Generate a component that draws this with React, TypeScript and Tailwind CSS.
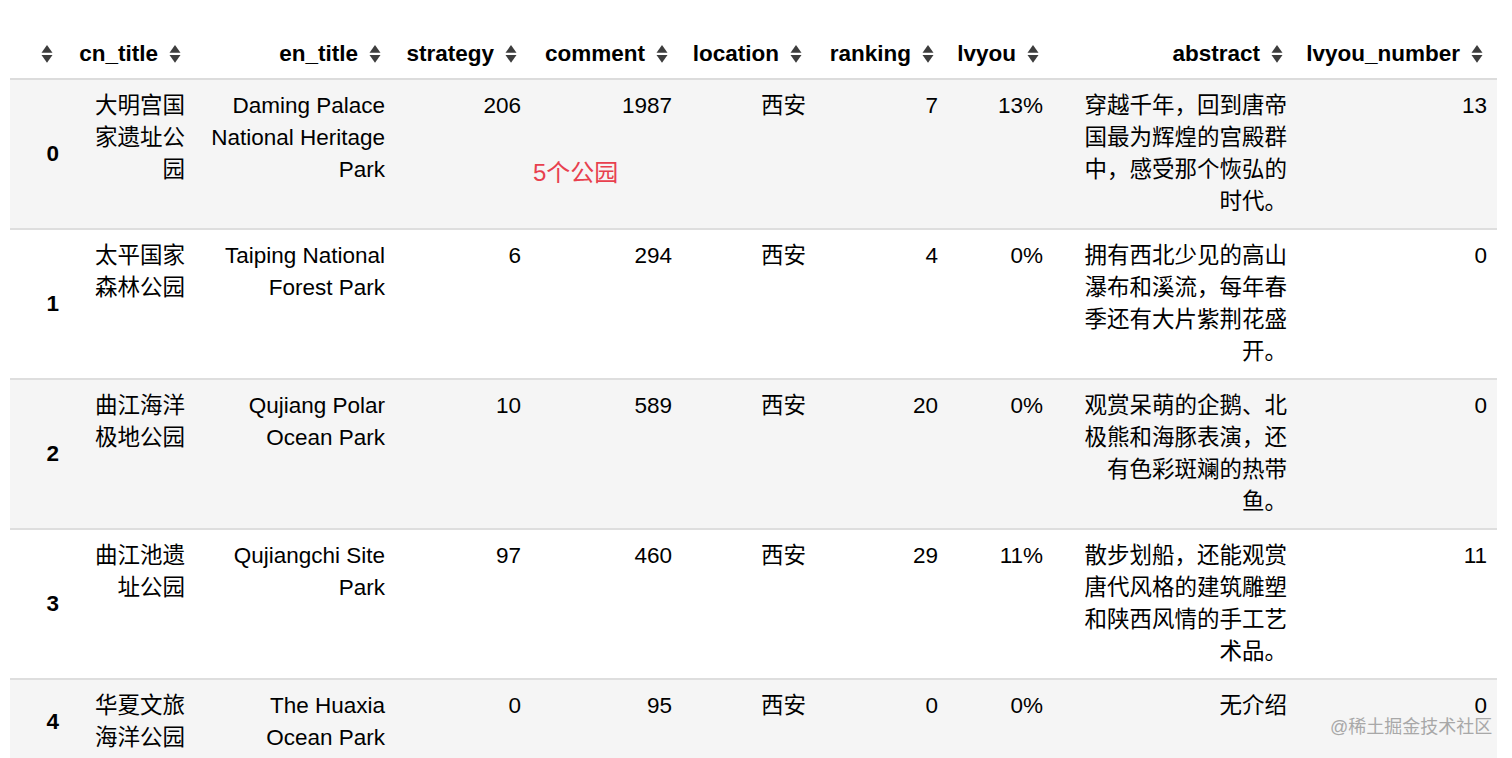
import React from "react";

const SortIcon = () => (
  <svg width="12" height="20" viewBox="0 0 12 20" className="shrink-0">
    <polygon points="0.5,8.8 6,1 11.5,8.8" fill="#3d3d3d" />
    <polygon points="0.5,11 11.5,11 6,18.8" fill="#3d3d3d" />
  </svg>
);

type Row = {
  idx: string;
  cn: string[];
  en: string[];
  strategy: string;
  comment: string;
  location: string;
  ranking: string;
  lvyou: string;
  abstract: string[];
  num: string;
};

const rows: Row[] = [
  {
    idx: "0",
    cn: ["大明宫国", "家遗址公", "园"],
    en: ["Daming Palace", "National Heritage", "Park"],
    strategy: "206",
    comment: "1987",
    location: "西安",
    ranking: "7",
    lvyou: "13%",
    abstract: ["穿越千年，回到唐帝", "国最为辉煌的宫殿群", "中，感受那个恢弘的", "时代。"],
    num: "13",
  },
  {
    idx: "1",
    cn: ["太平国家", "森林公园"],
    en: ["Taiping National", "Forest Park"],
    strategy: "6",
    comment: "294",
    location: "西安",
    ranking: "4",
    lvyou: "0%",
    abstract: ["拥有西北少见的高山", "瀑布和溪流，每年春", "季还有大片紫荆花盛", "开。"],
    num: "0",
  },
  {
    idx: "2",
    cn: ["曲江海洋", "极地公园"],
    en: ["Qujiang Polar", "Ocean Park"],
    strategy: "10",
    comment: "589",
    location: "西安",
    ranking: "20",
    lvyou: "0%",
    abstract: ["观赏呆萌的企鹅、北", "极熊和海豚表演，还", "有色彩斑斓的热带", "鱼。"],
    num: "0",
  },
  {
    idx: "3",
    cn: ["曲江池遗", "址公园"],
    en: ["Qujiangchi Site", "Park"],
    strategy: "97",
    comment: "460",
    location: "西安",
    ranking: "29",
    lvyou: "11%",
    abstract: ["散步划船，还能观赏", "唐代风格的建筑雕塑", "和陕西风情的手工艺", "术品。"],
    num: "11",
  },
  {
    idx: "4",
    cn: ["华夏文旅", "海洋公园"],
    en: ["The Huaxia", "Ocean Park"],
    strategy: "0",
    comment: "95",
    location: "西安",
    ranking: "0",
    lvyou: "0%",
    abstract: ["无介绍"],
    num: "0",
  },
];

const Lines = ({ lines }: { lines: string[] }) => (
  <>
    {lines.map((l, i) => (
      <div key={i}>{l}</div>
    ))}
  </>
);

const headers = [
  "cn_title",
  "en_title",
  "strategy",
  "comment",
  "location",
  "ranking",
  "lvyou",
  "abstract",
  "lvyou_number",
];

export default function App() {
  return (
    <div className="w-[1512px] h-[758px] overflow-hidden bg-white font-[family-name:'Liberation_Sans','Noto_Sans_CJK_SC',sans-serif] text-black">
      <div className="relative pt-[28px] pl-[10px]">
        <table className="table-fixed border-collapse w-[1487px] text-[22.5px] leading-[32px] whitespace-nowrap">
          <colgroup>
            <col className="w-[65px]" />
            <col className="w-[120px]" />
            <col className="w-[200px]" />
            <col className="w-[136px]" />
            <col className="w-[151px]" />
            <col className="w-[134px]" />
            <col className="w-[132px]" />
            <col className="w-[105px]" />
            <col className="w-[244px]" />
            <col className="w-[200px]" />
          </colgroup>
          <thead>
            <tr className="border-b-2 border-[#dcdcdc]">
              <th className="pt-[10px] pb-[8px] pr-[22px] font-bold">
                <div className="flex justify-end items-center">
                  <SortIcon />
                </div>
              </th>
              {headers.map((h) => (
                <th key={h} className="pt-[10px] pb-[8px] pr-[14px] font-bold">
                  <div className="flex justify-end items-center gap-[11px]">
                    <span>{h}</span>
                    <SortIcon />
                  </div>
                </th>
              ))}
            </tr>
          </thead>
          <tbody>
            {rows.map((r, i) => (
              <tr
                key={r.idx}
                className={`border-b-2 border-[#dedede] ${i % 2 === 0 ? "bg-[#f5f5f5]" : "bg-white"}`}
              >
                <th className="align-middle text-right font-bold pr-[16px] py-[10px]">{r.idx}</th>
                <td className="align-top text-right py-[10px] pr-[10px]">
                  <Lines lines={r.cn} />
                </td>
                <td className="align-top text-right py-[10px] pr-[10px]">
                  <Lines lines={r.en} />
                </td>
                <td className="align-top text-right py-[10px] pr-[10px]">{r.strategy}</td>
                <td className="align-top text-right py-[10px] pr-[10px]">{r.comment}</td>
                <td className="align-top text-right py-[10px] pr-[10px]">{r.location}</td>
                <td className="align-top text-right py-[10px] pr-[10px]">{r.ranking}</td>
                <td className="align-top text-right py-[10px] pr-[10px]">{r.lvyou}</td>
                <td className="align-top text-right py-[10px] pr-[10px]">
                  <Lines lines={r.abstract} />
                </td>
                <td className="align-top text-right py-[10px] pr-[10px]">{r.num}</td>
              </tr>
            ))}
          </tbody>
        </table>
        <div className="absolute left-[533px] top-[156px] text-[24px] leading-[34px] text-[#e8404e]">
          5个公园
        </div>
        <div className="absolute left-[1330px] top-[715px] text-[18px] leading-[24px] text-[#a8a8a8]">
          @稀土掘金技术社区
        </div>
      </div>
    </div>
  );
}
